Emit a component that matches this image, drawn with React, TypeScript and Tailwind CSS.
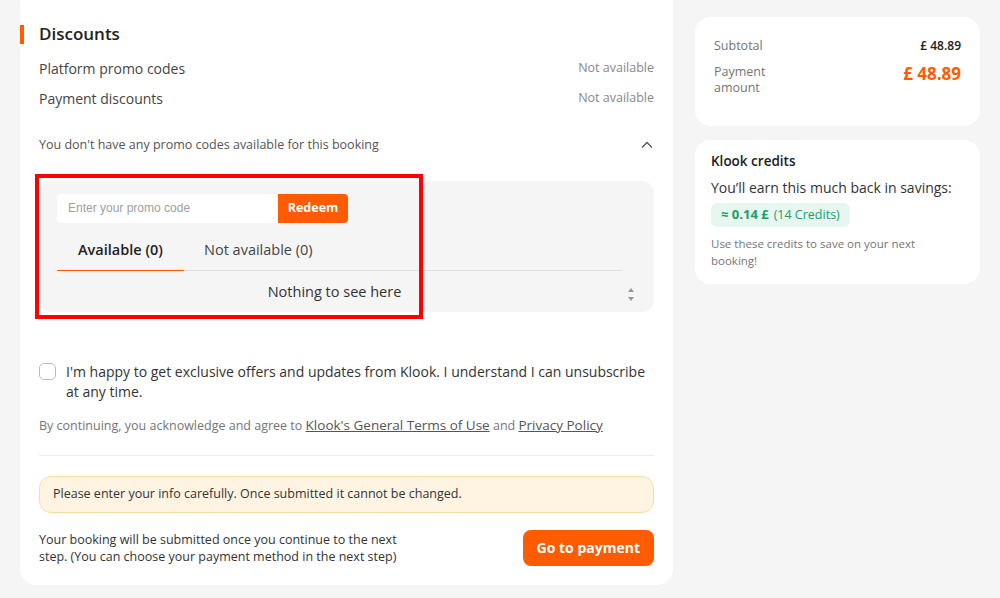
import React from 'react';

const font = { fontFamily: '"Open Sans", "Liberation Sans", sans-serif' };

const PriceCard = () => (
  <div className="bg-white rounded-2xl px-[19px] pt-[20px] pb-[30px]">
    <div className="flex justify-between items-center">
      <span className="text-[12.5px] text-[#757575]">Subtotal</span>
      <span className="text-[12px] font-semibold text-[#212121]">£ 48.89</span>
    </div>
    <div className="flex justify-between items-start mt-[8px]">
      <span className="text-[12.5px] leading-[16px] text-[#757575] w-[70px]">Payment amount</span>
      <span className="text-[17px] font-bold text-[#ff5b00] leading-[20px]">£ 48.89</span>
    </div>
  </div>
);

const CreditsCard = () => (
  <div className="bg-white rounded-2xl px-[16px] pt-[11px] pb-[15px]">
    <div className="text-[13.5px] font-semibold text-[#212121]">Klook credits</div>
    <div className="text-[14px] text-[#333] mt-[6px]">You’ll earn this much back in savings:</div>
    <div className="inline-flex items-center gap-[5px] bg-[#e7f7f0] rounded-md px-[10px] h-[24px] mt-[5px]">
      <span className="text-[13px] font-bold text-[#16a06a]">≈ 0.14 £</span>
      <span className="text-[12.5px] text-[#16a06a]">(14 Credits)</span>
    </div>
    <div className="text-[11.5px] leading-[17px] text-[#757575] mt-[8px] pr-[30px]">
      Use these credits to save on your next booking!
    </div>
  </div>
);

const ChevronUp = () => (
  <svg width="14" height="14" viewBox="0 0 14 14" fill="none">
    <path d="M2 9.5 L7 4.5 L12 9.5" stroke="#555" strokeWidth="1.3" />
  </svg>
);

const PromoBox = () => (
  <div className="bg-[#f5f5f5] rounded-xl mt-[26px] pl-[18px] pr-[16px] pt-[13px] h-[131px] overflow-hidden">
    <div className="flex h-[29px]">
      <div className="w-[221px] bg-white rounded-l-[4px] flex items-center pl-[11px] text-[12px] text-[#a0a0a0]" style={{ fontFamily: '"Liberation Sans", Arial, sans-serif' }}>
        Enter your promo code
      </div>
      <button className="w-[70px] bg-[#ff5b00] rounded-r-[4px] text-white text-[12.5px] font-bold">Redeem</button>
    </div>
    <div className="flex relative mt-[16px]">
      <div className="mr-[20px]">
        <div className="w-[127px] text-center text-[14.5px] font-semibold text-[#212121] pb-[9px] border-b border-[#ff5b00]">Available (0)</div>
      </div>
      <div className="text-[14.5px] text-[#444]">Not available (0)</div>
      <div className="absolute left-[127px] right-[16px] bottom-0 h-px bg-[#e0e0e0]" />
    </div>
    <div className="flex">
      <div className="flex-1 text-center text-[14.5px] text-[#333] pt-[10px] pr-[12px]">Nothing to see here</div>
      <div className="w-[14px] flex flex-col items-center pt-[17px] gap-[5px]">
        <svg width="6" height="4" viewBox="0 0 6 4"><path d="M0 4 L3 0 L6 4 Z" fill="#999" /></svg>
        <svg width="6" height="4" viewBox="0 0 6 4"><path d="M0 0 L3 4 L6 0 Z" fill="#999" /></svg>
      </div>
    </div>
  </div>
);

export default function App() {
  return (
    <div className="bg-[#f5f5f5] min-h-[598px] w-[1000px] relative" style={font}>
      <div className="flex gap-[22px] px-[20px]">
        <div className="w-[653px] bg-white rounded-b-2xl pl-[19px] pr-[19px] pt-[22px] pb-[19px] mb-[14px]">
          <div className="relative">
            <div className="absolute -left-[19px] top-[3px] w-[4px] h-[19px] bg-[#ff5b00]" />
            <h2 className="text-[17px] font-semibold text-[#212121] leading-[24px]">Discounts</h2>
          </div>
          <div className="flex justify-between items-center mt-[12px]">
            <span className="text-[14px] text-[#444]">Platform promo codes</span>
            <span className="text-[12.5px] text-[#888]">Not available</span>
          </div>
          <div className="flex justify-between items-center mt-[9px]">
            <span className="text-[14px] text-[#444]">Payment discounts</span>
            <span className="text-[12.5px] text-[#888]">Not available</span>
          </div>
          <div className="flex justify-between items-center mt-[27px]">
            <span className="text-[12.5px] text-[#555]">You don't have any promo codes available for this booking</span>
            <ChevronUp />
          </div>
          <PromoBox />
          <div className="flex gap-[10px] mt-[50px]">
            <div className="w-[17px] h-[17px] rounded-[5px] border border-[#bbb] shrink-0 mt-[1px]" />
            <p className="text-[14px] leading-[20px] text-[#333]">
              I'm happy to get exclusive offers and updates from Klook. I understand I can unsubscribe at any time.
            </p>
          </div>
          <p className="text-[12.5px] text-[#757575] mt-[13px]">
            By continuing, you acknowledge and agree to{' '}
            <span className="underline text-[#555] text-[13.5px]">Klook's General Terms of Use</span> and{' '}
            <span className="underline text-[#555] text-[13.5px]">Privacy Policy</span>
          </p>
          <div className="h-px bg-[#eeeeee] mt-[19px]" />
          <div className="mt-[20px] h-[37px] rounded-xl bg-[#fff4e2] border border-[#f7dcaa] flex items-center px-[13px] text-[12.5px] text-[#333]">
            Please enter your info carefully. Once submitted it cannot be changed.
          </div>
          <div className="flex justify-between items-center mt-[17px]">
            <p className="text-[12.5px] leading-[17px] text-[#333] w-[370px]">
              Your booking will be submitted once you continue to the next step. (You can choose your payment method in the next step)
            </p>
            <button className="h-[36px] px-[14px] rounded-lg bg-[#ff5b00] text-white text-[14px] font-bold">Go to payment</button>
          </div>
        </div>
        <div className="w-[285px] pt-[17px] flex flex-col gap-[14px]">
          <PriceCard />
          <CreditsCard />
        </div>
      </div>
      <div className="absolute left-[35px] top-[174px] w-[388px] h-[145px] border-[4px] border-[#ff0000] pointer-events-none" />
    </div>
  );
}
